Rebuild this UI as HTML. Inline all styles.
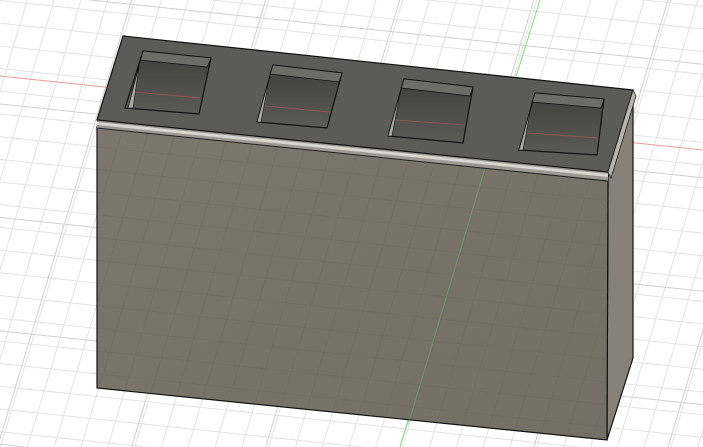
<!DOCTYPE html>
<html><head><style>html,body{margin:0;padding:0;background:#fff;overflow:hidden}svg{display:block}</style></head>
<body>
<svg width="703" height="447" viewBox="0 0 703 447" xmlns="http://www.w3.org/2000/svg">
<defs>
<pattern id="g" width="26" height="22" patternUnits="userSpaceOnUse" patternTransform="matrix(1,0.105,-0.3,1,0,0)">
<path d="M0 0.5H26M0.5 0V22" stroke="#e2e2e2" stroke-width="1" fill="none"/>
</pattern>
<pattern id="G" width="130" height="110" patternUnits="userSpaceOnUse" patternTransform="matrix(1,0.105,-0.3,1,0,-10)">
<path d="M0 0.5H130M0.5 0V110" stroke="#cfcfcf" stroke-width="1" fill="none"/>
</pattern>
<pattern id="fg" width="26" height="22" patternUnits="userSpaceOnUse" patternTransform="matrix(1,0.105,-0.3,1,0,0)">
<path d="M0 0.5H26M0.5 0V22" stroke="#5f5b52" stroke-width="1" fill="none" opacity="0.35"/>
</pattern>
<linearGradient id="front" x1="0" y1="0" x2="1" y2="1">
<stop offset="0" stop-color="#7c776c"/><stop offset="1" stop-color="#736f65"/></linearGradient>
<linearGradient id="hole" x1="0" y1="0" x2="0" y2="1">
<stop offset="0" stop-color="#3f3f3d"/><stop offset="1" stop-color="#5a5a56"/></linearGradient>
</defs>
<rect width="703" height="447" fill="#fff"/>
<rect width="703" height="447" fill="url(#g)"/>
<rect width="703" height="447" fill="url(#G)"/>
<line x1="0" y1="76" x2="703" y2="150" stroke="#e89a9a" stroke-width="1"/>
<line x1="540" y1="0" x2="400" y2="447" stroke="#8fd08f" stroke-width="1"/>
<!-- right face -->
<polygon points="608,177 633,90 633,358 607,440" fill="#86827a" stroke="#111" stroke-width="1.2"/>
<!-- front face -->
<polygon points="97,127 608,181 607,440 97,388" fill="url(#front)" stroke="#111" stroke-width="1.2"/>
<polygon points="97,127 608,181 607,440 97,388" fill="url(#fg)" opacity="0.6"/>
<line x1="485" y1="168" x2="408" y2="425" stroke="#6fbf6f" stroke-width="1" opacity="0.45"/>
<!-- lip -->
<polygon points="97,120 608,172 608,181 97,128" fill="#9d9a93"/>
<polygon points="97,122 608,174 608,177 97,125" fill="#d8d6d0"/>
<line x1="97" y1="128" x2="608" y2="181" stroke="#222" stroke-width="1"/>
<!-- top face -->
<polygon points="123,36 633,90 608,172 97,120" fill="#5b5b58" stroke="#111" stroke-width="1.2"/>
<polygon points="633,90 636,96 611,178 608,172" fill="#b8b6b0" stroke="#222" stroke-width="0.8"/>
<!-- holes -->
<g stroke="#111" stroke-width="1.2">
<polygon points="143,51 211,58 199,114 125,108" fill="url(#hole)"/>
<polygon points="143,51 211,58 207,67 140,60" fill="#6c6c68" stroke-width="0.8"/>
<polygon points="140,60 143,51 128,108 133,108" fill="#a8a8a2" stroke-width="0.6"/>
<polygon points="273,65 342,73 327,128 257,122" fill="url(#hole)"/>
<polygon points="273,65 342,73 339,82 270,74" fill="#6c6c68" stroke-width="0.8"/>
<polygon points="270,74 273,65 257,122 261,122" fill="#a8a8a2" stroke-width="0.6"/>
<polygon points="404,79 473,87 463,143 388,136" fill="url(#hole)"/>
<polygon points="404,79 473,87 470,96 401,88" fill="#6c6c68" stroke-width="0.8"/>
<polygon points="401,88 404,79 388,136 392,136" fill="#a8a8a2" stroke-width="0.6"/>
<polygon points="535,93 604,99 597,155 519,150" fill="url(#hole)"/>
<polygon points="535,93 604,99 601,108 532,102" fill="#6c6c68" stroke-width="0.8"/>
<polygon points="532,102 535,93 519,150 523,150" fill="#a8a8a2" stroke-width="0.6"/>
</g>
<g stroke="#b85a5a" stroke-width="1" opacity="0.6">
<line x1="135" y1="92" x2="200" y2="98"/><line x1="265" y1="106" x2="330" y2="112"/>
<line x1="395" y1="120" x2="465" y2="125"/><line x1="527" y1="133" x2="598" y2="138"/>
</g>
</svg>
</body></html>
